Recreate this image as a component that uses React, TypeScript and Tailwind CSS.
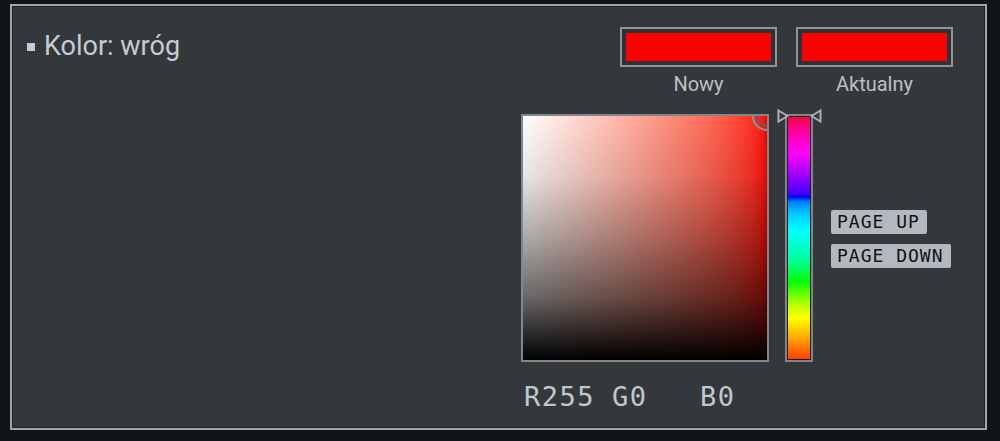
import React from "react";

function Swatch({ label }: { label: string }) {
  return (
    <div className="flex w-[157px] flex-col items-center">
      <div className="h-[40px] w-full border-2 border-[#8d949a] bg-[#2e3235] p-[4px]">
        <div className="h-full w-full bg-[#ff0000]" />
      </div>
      <span className="mt-[7px] text-[20px] leading-none text-[#b9c1c7]">
        {label}
      </span>
    </div>
  );
}

function HueBar() {
  return (
    <div className="relative ml-[16px] h-[248px] w-[28px] border-2 border-[#7f868c]">
      <div className="h-full w-full border border-[#1b1e20] bg-[linear-gradient(to_bottom,#ff0040_0%,#ff00a0_6%,#ff00ff_15%,#a000ff_24%,#4000ff_32%,#0000ff_33%,#0080ff_35%,#00c8ff_40%,#00ffff_47%,#00ff90_60%,#00ff00_68%,#c0ff00_78%,#ffff00_83%,#ffa000_92%,#ff4000_100%)]" />
      <svg
        className="absolute -top-[7px] -left-[10px]"
        width="12"
        height="14"
        viewBox="0 0 12 14"
      >
        <path d="M1.5 1.5 L10.5 7 L1.5 12.5 Z" fill="none" stroke="#a8afb5" strokeWidth="2" />
      </svg>
      <svg
        className="absolute -top-[7px] -right-[11px]"
        width="12"
        height="14"
        viewBox="0 0 12 14"
      >
        <path d="M10.5 1.5 L1.5 7 L10.5 12.5 Z" fill="none" stroke="#a8afb5" strokeWidth="2" />
      </svg>
    </div>
  );
}

function PageButton({ text, width }: { text: string; width: string }) {
  return (
    <div
      className={`${width} flex h-[24px] items-center rounded-[2px] bg-[#b3babf] pl-[6px] font-['DejaVu_Sans_Mono',monospace] text-[18px] leading-none tracking-[1px] text-[#101214]`}
    >
      {text}
    </div>
  );
}

export default function App() {
  return (
    <div className="h-[441px] w-[1000px] bg-[#121517] pt-[4px] pl-[10px] font-['Roboto',sans-serif]">
      <div className="h-[426px] w-[977px] border-2 border-[#9ea5ab]">
        <div className="flex h-full w-full border border-[#1e2225] bg-[#34383b]">
          <div className="flex-1 pt-[26px] pl-[14px]">
            <div className="flex items-center gap-[9px] text-[27px] leading-none text-[#c3ccd2]">
              <div className="h-[8px] w-[8px] bg-[#c3ccd2]" />
              <span>Kolor: wróg</span>
            </div>
          </div>

          <div className="mr-[31px] flex w-[432px] flex-col pt-[20px]">
            <div className="ml-[99px] flex gap-[19px]">
              <Swatch label="Nowy" />
              <Swatch label="Aktualny" />
            </div>

            <div className="mt-[20px] flex items-start">
              <div className="h-[248px] w-[248px] border-2 border-[#80878d]">
                <div className="relative h-full w-full overflow-hidden bg-linear-to-r from-white to-[#ff0000]">
                  <div className="h-full w-full bg-[linear-gradient(to_bottom,rgba(0,0,0,0)_0%,rgba(0,0,0,0.1)_25%,rgba(0,0,0,0.33)_50%,rgba(0,0,0,0.6)_75%,rgba(0,0,0,1)_100%)]" />
                  <div className="absolute -top-[15px] -right-[15px] h-[30px] w-[30px] rounded-full border-2 border-[#8e959b]" />
                  <div className="absolute -top-[11px] -right-[11px] h-[22px] w-[22px] rounded-full border-2 border-[#5b6166]" />
                </div>
              </div>
              <HueBar />
              <div className="ml-[18px] mt-[96px] flex flex-col gap-[10px]">
                <PageButton text="PAGE UP" width="w-[96px]" />
                <PageButton text="PAGE DOWN" width="w-[120px]" />
              </div>
            </div>

            <div className="mt-[21px] flex pl-[3px] font-['DejaVu_Sans_Mono',monospace] text-[27px] leading-none tracking-[1.5px] text-[#c0c8ce]">
              <span className="w-[88px]">R255</span>
              <span className="w-[88px]">G0</span>
              <span className="w-[88px]">B0</span>
            </div>
          </div>
        </div>
      </div>
    </div>
  );
}
